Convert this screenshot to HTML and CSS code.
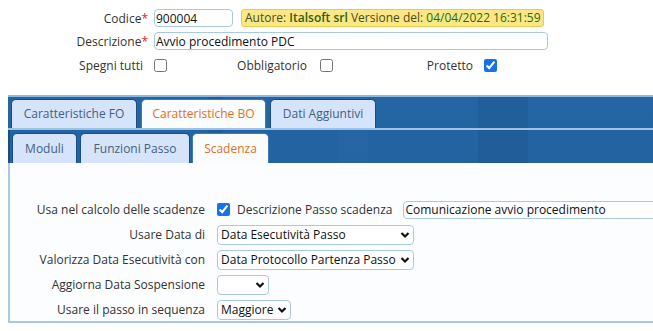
FILE: index.html
```html
<!DOCTYPE html>
<html lang="it">
<head>
    <meta charset="UTF-8">
    <title>Passo procedimento</title>
    <link rel="stylesheet" href="styles.css">
</head>
<body>
    <div class="testata">
        <label class="etichetta">Codice<span class="obbl">*</span></label>
        <div class="campo">
            <input type="text" class="codice" value="900004">
            <span class="autore">Autore: <b>Italsoft srl</b> Versione del: <span class="data">04/04/2022 16:31:59</span></span>
        </div>
        <label class="etichetta">Descrizione<span class="obbl">*</span></label>
        <div class="campo">
            <input type="text" class="descrizione" value="Avvio procedimento PDC">
        </div>
        <label class="etichetta spegni">Spegni tutti</label>
        <div class="campo">
            <input type="checkbox">
            <label class="flag">Obbligatorio</label>
            <input type="checkbox">
            <label class="flag">Protetto</label>
            <input type="checkbox" checked>
        </div>
    </div>

    <div class="pannello">
        <ul class="schede">
            <li class="fo">Caratteristiche FO</li>
            <li class="bo attiva">Caratteristiche BO</li>
            <li class="dati">Dati Aggiuntivi</li>
        </ul>
        <div class="interno">
            <ul class="schede sotto">
                <li class="moduli">Moduli</li>
                <li class="funzioni">Funzioni Passo</li>
                <li class="scadenza attiva">Scadenza</li>
            </ul>
            <div class="contenuto">
                <div class="riga">
                    <label class="etichetta">Usa nel calcolo delle scadenze</label>
                    <div class="campo">
                        <input type="checkbox" checked>
                        <label class="desc-passo">Descrizione Passo scadenza</label>
                        <input type="text" class="comunicazione" value="Comunicazione avvio procedimento">
                    </div>
                </div>
                <div class="riga">
                    <label class="etichetta">Usare Data di</label>
                    <div class="campo">
                        <span class="tendina larga">Data Esecutività Passo<svg viewBox="0 0 10 8"><path d="M1.5 2 L5 5.5 L8.5 2" /></svg></span>
                    </div>
                </div>
                <div class="riga">
                    <label class="etichetta">Valorizza Data Esecutività con</label>
                    <div class="campo">
                        <span class="tendina larga">Data Protocollo Partenza Passo<svg viewBox="0 0 10 8"><path d="M1.5 2 L5 5.5 L8.5 2" /></svg></span>
                    </div>
                </div>
                <div class="riga">
                    <label class="etichetta">Aggiorna Data Sospensione</label>
                    <div class="campo">
                        <span class="tendina vuota"><svg viewBox="0 0 10 8"><path d="M1.5 2 L5 5.5 L8.5 2" /></svg></span>
                    </div>
                </div>
                <div class="riga">
                    <label class="etichetta">Usare il passo in sequenza</label>
                    <div class="campo">
                        <span class="tendina">Maggiore<svg viewBox="0 0 10 8"><path d="M1.5 2 L5 5.5 L8.5 2" /></svg></span>
                    </div>
                </div>
            </div>
        </div>
    </div>
</body>
</html>
```

FILE: styles.css
```css
body {
    font-family: "Open Sans", "Liberation Sans", sans-serif;
    font-size: 12px;
    color: #333;
    background: #fff;
    margin: 0;
    overflow: hidden;
}
input[type="text"] {
    font-family: inherit;
    font-size: 12px;
    color: #111;
    height: 18px;
    box-sizing: border-box;
    border: 1px solid #a9c8e4;
    border-radius: 4px;
    padding: 0 1px;
    margin: 0;
    background: #fff;
    flex-shrink: 0;
}
input[type="checkbox"] {
    width: 13px;
    height: 13px;
    margin: 0;
    flex-shrink: 0;
    accent-color: #1672e8;
}
.testata {
    display: grid;
    grid-template-columns: 148px auto;
    grid-auto-rows: 18px;
    column-gap: 6px;
    row-gap: 5px;
    padding-top: 9px;
    align-items: center;
}
.etichetta {
    text-align: right;
    white-space: nowrap;
}
.obbl {
    color: #e0201c;
}
.campo {
    display: flex;
    align-items: center;
    white-space: nowrap;
}
.codice {
    width: 79px;
}
.autore {
    margin-left: 8px;
    height: 18px;
    line-height: 16px;
    box-sizing: border-box;
    padding: 0 2px 0 3px;
    background: #fbe784;
    border: 1px solid #eccb4a;
    border-radius: 3px;
    color: #4a4a20;
}
.autore b {
    color: #2d5e12;
    font-weight: 600;
}
.autore .data {
    color: #1f6a14;
}
.descrizione {
    width: 394px;
}
.spegni {
    padding-right: 5px;
    margin-top: 2px;
}
.testata .campo:last-child {
    margin-top: 2px;
}
.flag {
    width: 140px;
    text-align: right;
    margin-right: 13px;
}
.flag + input + .flag {
    margin-right: 11px;
}

.pannello {
    margin: 22px 0 0 8px;
    border-top: 2px solid #8db8e0;
    background-color: #21609d;
    background-image:
        linear-gradient(90deg, transparent 200px, rgba(20, 70, 120, 0.25) 200px, rgba(20, 70, 120, 0.25) 215px, transparent 215px,
            transparent 330px, rgba(50, 110, 170, 0.2) 330px, rgba(50, 110, 170, 0.2) 360px, transparent 360px,
            transparent 470px, rgba(20, 70, 120, 0.2) 470px, rgba(20, 70, 120, 0.2) 520px, transparent 520px),
        linear-gradient(#2465a3, #1f5c98);
}
.schede {
    list-style: none;
    margin: 0;
    padding: 2px 0 0 3px;
    display: flex;
    gap: 4px;
}
.schede li {
    box-sizing: border-box;
    height: 29px;
    line-height: 28px;
    text-align: center;
    white-space: nowrap;
    background: #d5e4fa;
    color: #44607e;
    border: 1px solid #1a4d80;
    border-bottom: none;
    border-radius: 5px 5px 0 0;
}
.schede .fo { width: 126px; }
.schede .bo { width: 125px; }
.schede .dati { width: 106px; }
.schede li.attiva {
    background: #fafcfe;
    color: #e2701c;
    border-color: #3d7ab6;
}
.interno {
    border-top: 2px solid #9cc2e6;
}
.schede.sotto {
    padding: 3px 0 0 2px;
    gap: 3px;
    border-left: 2px solid #1a4d80;
}
.schede.sotto li {
    height: 30px;
    line-height: 30px;
}
.schede .moduli { width: 65px; }
.schede .funzioni { width: 110px; }
.schede .scadenza { width: 77px; margin-left: -1px; }

.contenuto {
    box-sizing: border-box;
    height: 160px;
    background: #fcfdfe;
    border-left: 2px solid #a6c9e8;
    border-bottom: 2px solid #a6c9e8;
    padding-top: 34px;
    overflow: hidden;
}
.riga {
    display: grid;
    grid-template-columns: 195px 1fr;
    column-gap: 12px;
    align-items: center;
    height: 25px;
}
.desc-passo {
    margin-left: 7px;
    margin-right: 11px;
}
.comunicazione {
    width: 270px;
}
.tendina {
    display: inline-flex;
    align-items: center;
    justify-content: space-between;
    height: 20px;
    box-sizing: border-box;
    border: 1px solid #a9c8e4;
    border-radius: 4px;
    padding: 0 3px 0 3px;
    color: #111;
    background: #fff;
    white-space: nowrap;
}
.tendina svg {
    width: 10px;
    height: 8px;
    margin-left: 4px;
    fill: none;
    stroke: #111;
    stroke-width: 2.2;
}
.tendina.larga {
    width: 197px;
}
.tendina.vuota {
    width: 52px;
    justify-content: flex-end;
}
```
